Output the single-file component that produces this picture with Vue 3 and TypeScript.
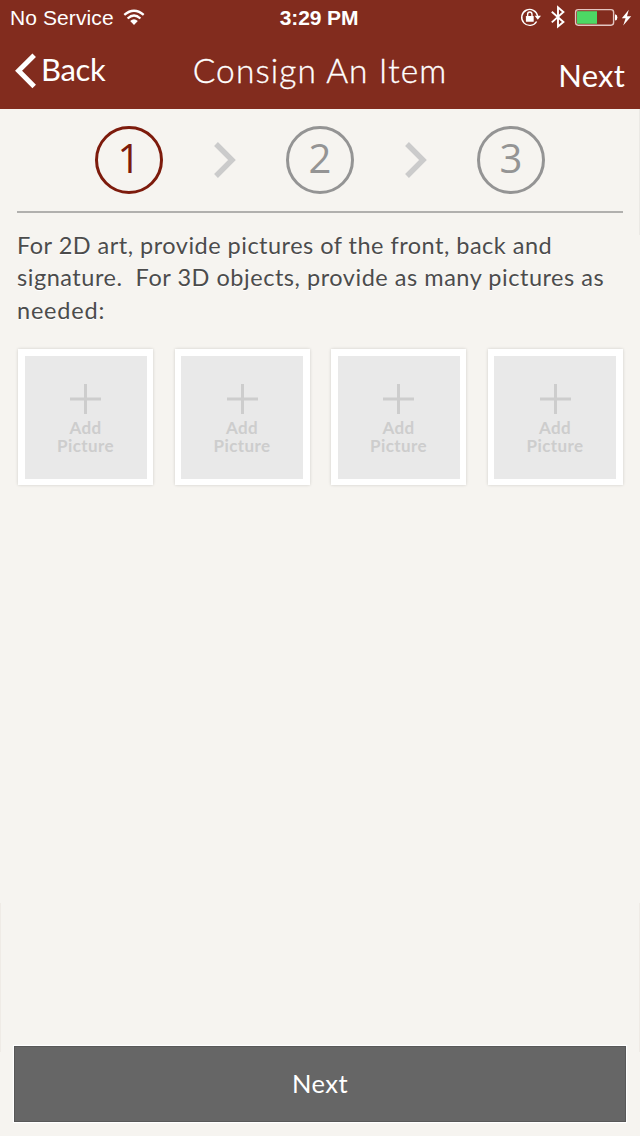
<script setup lang="ts">
interface Step {
  label: string
  active: boolean
}

const steps: Step[] = [
  { label: '1', active: true },
  { label: '2', active: false },
  { label: '3', active: false },
]

const instructions: string[] = [
  'For 2D art, provide pictures of the front, back and',
  'signature.\u00a0 For 3D objects, provide as many pictures as',
  'needed:',
]

const slots: number[] = [1, 2, 3, 4]
</script>

<template>
  <div class="screen">
    <header class="header">
      <div class="status">
        <div class="status-side">
          <span class="carrier">No Service</span>
          <svg class="wifi" width="22" height="17" viewBox="0 0 22 17">
            <g fill="none" stroke="#fff" stroke-width="2.3">
              <path d="M1.3 5.8Q11 -2.4 20.7 5.8" />
              <path d="M4.6 9.5Q11 3.6 17.4 9.5" />
            </g>
            <path d="M7.2 12Q11 8.6 14.8 12L11 16Z" fill="#fff" />
          </svg>
        </div>
        <span class="clock">3:29 PM</span>
        <div class="status-side status-right">
          <svg width="112" height="24" viewBox="0 0 112 24">
            <path d="M16.6 16.5A8 8 0 1 1 17.6 11" fill="none" stroke="#fff" stroke-width="1.4" />
            <path d="M14.6 10.8H21L17.8 14.8Z" fill="#fff" />
            <rect x="5.9" y="11" width="7.8" height="5.8" rx="0.5" fill="#fff" />
            <path d="M7.6 11.5V9.4A2.2 2.4 0 0 1 12 9.4V11.5" fill="none" stroke="#fff" stroke-width="1.4" />
            <path d="M31.8 6.8L43.4 17L38 21.4V2.4L43.4 7L31.8 17.4" fill="none" stroke="#fff" stroke-width="1.9" />
            <rect x="55.6" y="4.6" width="38" height="15.6" rx="2.6" fill="none" stroke="#e3c6c1" stroke-width="1.4" />
            <rect x="57" y="6.2" width="20" height="12.6" fill="#4cd964" />
            <path d="M95 9.2Q97.4 9.6 97.4 12.4T95 15.6Z" fill="#fff" />
            <path d="M108.8 4.8L101.8 13.2H105.6L103.2 20.4L111.2 11.2H107Z" fill="#fff" />
          </svg>
        </div>
      </div>
      <nav class="nav">
        <div class="back">
          <svg class="back-icon" width="22" height="36" viewBox="0 0 22 36">
            <path d="M19.2 2.2L3.6 17.8L19.2 33.4" fill="none" stroke="#fff" stroke-width="5" />
          </svg>
          <span class="back-text">Back</span>
        </div>
        <h1 class="title">Consign An Item</h1>
        <span class="nav-next">Next</span>
      </nav>
    </header>

    <main class="content">
      <div class="steps">
        <template v-for="(step, i) in steps" :key="step.label">
          <svg v-if="i > 0" class="arrow" width="22" height="36" viewBox="0 0 22 36">
            <path d="M2 2L18 18L2 34" fill="none" stroke="#cbcbcb" stroke-width="5.4" />
          </svg>
          <div class="step" :class="{ active: step.active }">{{ step.label }}</div>
        </template>
      </div>

      <div class="info">
        <div v-for="(line, i) in instructions" :key="i" class="line" :class="'line-' + (i + 1)">{{ line }}</div>
      </div>

      <div class="slots">
        <div v-for="n in slots" :key="n" class="slot">
          <div class="slot-inner">
            <svg class="plus" width="31" height="30" viewBox="0 0 31 30">
              <path d="M15.5 0V30M0 15H31" stroke="#cdcdcd" stroke-width="3" />
            </svg>
            <span class="slot-label">Add<br />Picture</span>
          </div>
        </div>
      </div>
    </main>

    <button class="next" type="button">Next</button>
  </div>
</template>

<style>
body {
  margin: 0;
}
</style>

<style scoped>
.screen {
  box-sizing: border-box;
  width: 640px;
  height: 1136px;
  display: flex;
  flex-direction: column;
  background:
    linear-gradient(#efebe6, #efebe6) 0 903px / 1px 149px no-repeat,
    linear-gradient(#efebe6, #efebe6) 639px 903px / 1px 149px no-repeat,
    linear-gradient(#ebe9e5, #ebe9e5) 639px 109px / 1px 126px no-repeat,
    #f6f4f0;
  font-family: Lato, "Open Sans", sans-serif;
  overflow: hidden;
  white-space: nowrap;
}

.header {
  height: 109px;
  flex: none;
  background: #822c1e;
  color: #fff;
}

.status {
  display: grid;
  grid-template-columns: 1fr auto 1fr;
  height: 36px;
  font-family: "Liberation Sans", Arial, sans-serif;
  font-size: 21px;
  line-height: 36px;
}

.status-side {
  display: flex;
  align-items: flex-start;
}

.carrier {
  margin-left: 10px;
  width: 103px;
  letter-spacing: 0.1px;
}

.wifi {
  margin: 9px 0 0 10px;
}

.clock {
  margin-left: -2px;
  font-weight: 700;
  letter-spacing: -0.1px;
}

.status-right {
  justify-content: flex-end;
  padding: 5px 8px 0 0;
}

.nav {
  display: grid;
  grid-template-columns: 1fr auto 1fr;
  height: 73px;
}

.back {
  display: flex;
}

.back-icon {
  margin: 17px 0 0 15px;
}

.back-text {
  margin: 13px 0 0 4px;
  font-size: 31px;
  line-height: 40px;
  letter-spacing: -0.3px;
}

.title {
  margin: 14px 0 0;
  font-size: 33.5px;
  font-weight: 300;
  line-height: 40px;
  letter-spacing: 1.1px;
  -webkit-text-stroke: 0.35px #fff;
}

.nav-next {
  margin: 19px 15px 0 0;
  text-align: right;
  font-size: 31px;
  line-height: 40px;
  letter-spacing: 0.2px;
}

.content {
  flex: 1;
  padding: 0 17px;
}

.steps {
  box-sizing: border-box;
  height: 104px;
  display: flex;
  justify-content: space-between;
  padding: 17px 78px 0;
  border-bottom: 2px solid #b1b0ae;
}

.step {
  box-sizing: border-box;
  width: 68px;
  height: 68px;
  border: 3px solid #949494;
  border-radius: 50%;
  color: #949494;
  font-family: "Open Sans", sans-serif;
  font-size: 40px;
  line-height: 58px;
  text-align: center;
}

.step.active {
  border-color: #7d1b0c;
  color: #7d1b0c;
}

.arrow {
  margin-top: 16px;
}

.info {
  margin-top: 16px;
  color: #4c4c4c;
  font-size: 23.5px;
  line-height: 32.4px;
  text-shadow: 0 1px 0 #fff;
}

.line-1 {
  letter-spacing: 0.49px;
}

.line-2 {
  letter-spacing: 0.53px;
}

.line-3 {
  letter-spacing: 0.8px;
}

.slots {
  display: flex;
  justify-content: space-between;
  margin: 23px 0 0;
  padding: 0 0.5px 0 1px;
}

.slot {
  box-sizing: border-box;
  width: 135px;
  height: 136px;
  padding: 6.5px;
  background: #fff;
  box-shadow: 0 0 3px rgba(0, 0, 0, 0.16);
}

.slot-inner {
  height: 123px;
  display: flex;
  flex-direction: column;
  align-items: center;
  background: #e9e9e9;
  color: #cdcdcd;
  font-size: 17px;
  font-weight: 700;
  line-height: 17.8px;
  letter-spacing: 0.4px;
  text-align: center;
}

.plus {
  margin: 28px 0 5.4px;
}

.next {
  flex: none;
  width: 612px;
  height: 76px;
  margin: 0 14px 14px;
  padding: 0 0 2px;
  border: 1px solid #585858;
  background: #666;
  color: #fff;
  font-family: inherit;
  font-size: 25.5px;
  letter-spacing: 0.5px;
  box-shadow: 0 0 1px 1px #fff;
}
</style>
